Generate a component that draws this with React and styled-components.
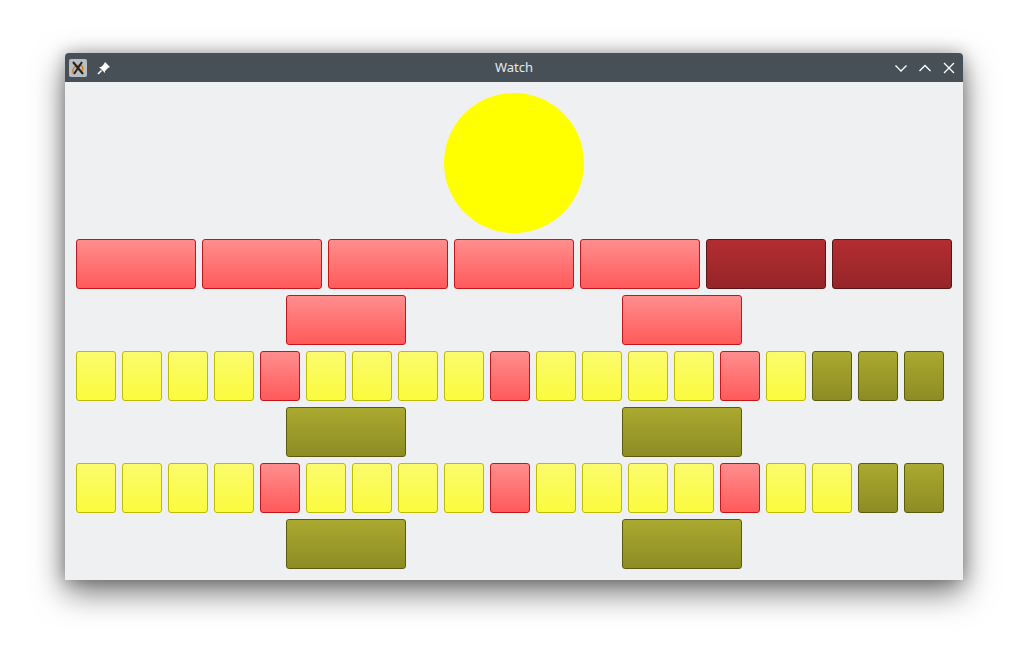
import React from "react";
import styled, { createGlobalStyle, css } from "styled-components";

const Global = createGlobalStyle`
  html, body { margin: 0; padding: 0; background: #ffffff; }
  body { font-family: "Noto Sans", "DejaVu Sans", sans-serif; }
`;

const Page = styled.div`
  width: 1028px;
  height: 657px;
  padding: 53px 0 0 65px;
  box-sizing: border-box;
  overflow: hidden;
`;

const Window = styled.div`
  width: 898px;
  display: flex;
  flex-direction: column;
  border-radius: 4px 4px 0 0;
  box-shadow: 0 12px 32px rgba(0, 0, 0, 0.55), 0 0 16px rgba(0, 0, 0, 0.25);
  background: #eff0f1;
`;

const TitleBar = styled.div`
  height: 29px;
  background: #475057;
  border-radius: 4px 4px 0 0;
  display: flex;
  align-items: center;
  padding: 0 6px 0 4px;
  position: relative;
`;

const Title = styled.div`
  position: absolute;
  left: 0;
  right: 0;
  top: 6px;
  text-align: center;
  color: #e6e9ec;
  font-size: 13px;
  line-height: 17px;
  pointer-events: none;
`;

const LeftIcons = styled.div`
  display: flex;
  align-items: center;
  gap: 9px;
`;

const RightIcons = styled.div`
  margin-left: auto;
  display: flex;
  align-items: center;
  gap: 8px;
`;

const IconBox = styled.div`
  width: 16px;
  height: 16px;
  display: flex;
  align-items: center;
  justify-content: center;
`;

const Content = styled.div`
  padding: 11px;
  display: flex;
  flex-direction: column;
  gap: 6px;
`;

const CircleRow = styled.div`
  display: flex;
  justify-content: center;
`;

const Circle = styled.div`
  width: 140px;
  height: 140px;
  border-radius: 50%;
  background: #ffff00;
`;

const Row = styled.div`
  display: flex;
  gap: 6px;
  height: 50px;
`;

const PairRow = styled.div`
  display: flex;
  height: 50px;
  padding-left: 210px;
  gap: 216px;
`;

const variants = {
  red: css`
    background: linear-gradient(#ff8e8e, #ff5a5a);
    border-color: #c4151a;
  `,
  dark: css`
    background: linear-gradient(#b32d31, #952528);
    border-color: #5c1315;
  `,
  yellow: css`
    background: linear-gradient(#fbfb6e, #fbfb3e);
    border-color: #bcbc00;
  `,
  olive: css`
    background: linear-gradient(#aaa930, #8d8c24);
    border-color: #5c5b0c;
  `,
};

const Tile = styled.div`
  box-sizing: border-box;
  width: ${(p) => (p.$wide ? 120 : 40)}px;
  height: 50px;
  border: 1px solid;
  border-radius: 3px;
  ${(p) => variants[p.$kind]}
`;

const row1 = ["red", "red", "red", "red", "red", "dark", "dark"];
const row3 = "yyyyRyyyyRyyyyRyOOO";
const row5 = "yyyyRyyyyRyyyyRyyOO";
const map = { y: "yellow", R: "red", O: "olive" };

const AppIcon = () => (
  <svg width="18" height="18" viewBox="0 0 18 18">
    <rect x="0" y="0" width="18" height="18" rx="2" fill="#b8bec3" />
    <path d="M4 14 C3 10 6 7 10 6 C13 6 15 9 13 12" stroke="#e07a1a" strokeWidth="1.6" fill="none" />
    <path d="M4 3 L14 15 M13 3 L5 15" stroke="#222" strokeWidth="2" />
  </svg>
);

const Pin = () => (
  <svg width="14" height="14" viewBox="0 0 14 14">
    <path d="M8 1 L13 6 L11 7 L8 10 L8 12 L2 6 L4 6 L7 3 Z" fill="#fff" />
    <path d="M4.5 9.5 L1 13" stroke="#fff" strokeWidth="1.4" />
  </svg>
);

const Chevron = ({ up }) => (
  <svg width="14" height="14" viewBox="0 0 14 14">
    <path d={up ? "M1.5 10 L7 4.5 L12.5 10" : "M1.5 4.5 L7 10 L12.5 4.5"} stroke="#fff" strokeWidth="1.3" fill="none" />
  </svg>
);

const Close = () => (
  <svg width="14" height="14" viewBox="0 0 14 14">
    <path d="M2 2 L12 12 M12 2 L2 12" stroke="#fff" strokeWidth="1.3" />
  </svg>
);

const Pair = ({ kind }) => (
  <PairRow>
    <Tile $wide $kind={kind} />
    <Tile $wide $kind={kind} />
  </PairRow>
);

export default function App() {
  return (
    <Page>
      <Global />
      <Window>
        <TitleBar>
          <Title>Watch</Title>
          <LeftIcons>
            <AppIcon />
            <IconBox>
              <Pin />
            </IconBox>
          </LeftIcons>
          <RightIcons>
            <IconBox>
              <Chevron />
            </IconBox>
            <IconBox>
              <Chevron up />
            </IconBox>
            <IconBox>
              <Close />
            </IconBox>
          </RightIcons>
        </TitleBar>
        <Content>
          <CircleRow>
            <Circle />
          </CircleRow>
          <Row>
            {row1.map((k, i) => (
              <Tile key={i} $wide $kind={k} />
            ))}
          </Row>
          <Pair kind="red" />
          <Row>
            {row3.split("").map((c, i) => (
              <Tile key={i} $kind={map[c]} />
            ))}
          </Row>
          <Pair kind="olive" />
          <Row>
            {row5.split("").map((c, i) => (
              <Tile key={i} $kind={map[c]} />
            ))}
          </Row>
          <Pair kind="olive" />
        </Content>
      </Window>
    </Page>
  );
}
